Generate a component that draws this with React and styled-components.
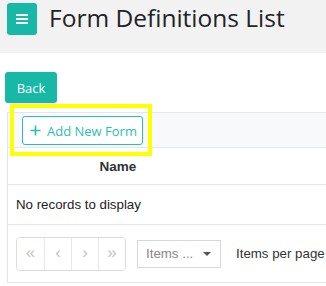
import React from "react";
import styled, { createGlobalStyle } from "styled-components";

const Global = createGlobalStyle`
  html, body { margin: 0; padding: 0; background: #fff; overflow: hidden; }
  body { font-family: "Open Sans", sans-serif; color: #212529; }
  *, *::before, *::after { box-sizing: border-box; }
`;

const Header = styled.header`
  display: flex;
  align-items: flex-start;
  gap: 12px;
  height: 53px;
  padding: 3px 0 0 7px;
  background: #f2f2f2;
`;

const MenuButton = styled.button`
  width: 30px;
  height: 32px;
  border: none;
  border-radius: 3px;
  background: #17b9a6;
  display: flex;
  align-items: center;
  justify-content: center;
  padding: 0;
`;

const Title = styled.h1`
  margin: 0;
  font-family: "Open Sans", sans-serif;
  font-weight: 400;
  font-size: 24.5px;
  line-height: 30px;
  color: #1f2328;
  white-space: nowrap;
`;

const Main = styled.main`
  padding: 19px 0 0 5px;
`;

const BackButton = styled.button`
  width: 52px;
  height: 31px;
  border: none;
  border-radius: 3px;
  background: #17b9a6;
  color: #fff;
  font-family: "Open Sans", sans-serif;
  font-size: 13px;
  padding: 0;
`;

const Panel = styled.section`
  margin: 9px 0 0 2px;
  width: 420px;
  border: 1px solid #e4e6e9;
  border-right: none;
  box-shadow: 0 1px 2px rgba(0, 0, 0, 0.05);
`;

const Toolbar = styled.div`
  background: #f8f9fa;
  padding: 3px 0 0 14px;
  border-bottom: 1px solid #e4e6e9;
  height: 35px;
`;

const Highlighted = styled.span`
  position: relative;
  display: inline-block;
`;

const Marker = styled.span`
  position: absolute;
  left: -12px;
  top: -12px;
  right: -9px;
  bottom: -11px;
  border: 4px solid #ffff00;
  pointer-events: none;
`;

const OutlineButton = styled.button`
  display: flex;
  align-items: center;
  gap: 6px;
  height: 29px;
  width: 121px;
  padding: 0 0 0 7px;
  border: 1px solid #2bbfae;
  border-radius: 3px;
  background: #fff;
  color: #2bbfae;
  font-family: "Open Sans", sans-serif;
  font-size: 13px;
`;

const HeadRow = styled.div`
  height: 37px;
  display: flex;
  align-items: center;
  border-bottom: 1px solid #e4e6e9;
`;

const HeadCell = styled.div`
  width: 220px;
  text-align: center;
  font-family: "Liberation Sans", Arial, sans-serif;
  font-weight: 700;
  font-size: 13.5px;
  color: #333;
`;

const EmptyRow = styled.div`
  height: 40px;
  display: flex;
  align-items: center;
  padding-left: 8px;
  border-bottom: 1px solid #e4e6e9;
  font-family: "Liberation Sans", Arial, sans-serif;
  font-size: 13.3px;
  color: #222;
`;

const Pager = styled.div`
  height: 57px;
  display: flex;
  align-items: center;
  padding-left: 8px;
  gap: 11px;
`;

const PageGroup = styled.div`
  display: flex;
  height: 34px;
  border: 1px solid #dcdcdc;
  border-radius: 4px;
  overflow: hidden;
`;

const PageBtn = styled.button`
  width: 27px;
  height: 100%;
  border: none;
  border-left: ${(p) => (p.$first ? "none" : "1px solid #e8e8e8")};
  background: #fff;
  color: #c4c4c4;
  font-family: "Liberation Sans", Arial, sans-serif;
  font-size: 17px;
  padding: 0 0 2px;
`;

const Select = styled.div`
  width: 84px;
  height: 28px;
  border: 1px solid #d8d8d8;
  display: flex;
  align-items: center;
  justify-content: space-between;
  padding: 0 9px 0 8px;
  font-family: "Liberation Sans", Arial, sans-serif;
  font-size: 13.3px;
  color: #888;
`;

const Caret = styled.span`
  width: 0;
  height: 0;
  border-left: 4px solid transparent;
  border-right: 4px solid transparent;
  border-top: 4px solid #555;
`;

const PerPage = styled.span`
  margin-left: 4px;
  font-family: "Liberation Sans", Arial, sans-serif;
  font-size: 13.3px;
  color: #333;
  white-space: nowrap;
`;

export default function App() {
  return (
    <>
      <Global />
      <Header>
        <MenuButton aria-label="menu">
          <svg width="12" height="10" viewBox="0 0 12 10">
            <rect x="0" y="0" width="12" height="2" fill="#fff" />
            <rect x="0" y="4" width="12" height="2" fill="#fff" />
            <rect x="0" y="8" width="12" height="2" fill="#fff" />
          </svg>
        </MenuButton>
        <Title>Form Definitions List</Title>
      </Header>
      <Main>
        <BackButton>Back</BackButton>
        <Panel>
          <Toolbar>
            <Highlighted>
              <OutlineButton>
                <svg width="11" height="11" viewBox="0 0 11 11">
                  <path d="M5.5 0.5v10M0.5 5.5h10" stroke="#2bbfae" strokeWidth="1.6" />
                </svg>
                Add New Form
              </OutlineButton>
              <Marker />
            </Highlighted>
          </Toolbar>
          <HeadRow>
            <HeadCell>Name</HeadCell>
          </HeadRow>
          <EmptyRow>No records to display</EmptyRow>
          <Pager>
            <PageGroup>
              <PageBtn $first>«</PageBtn>
              <PageBtn>‹</PageBtn>
              <PageBtn>›</PageBtn>
              <PageBtn>»</PageBtn>
            </PageGroup>
            <Select>
              <span>Items ...</span>
              <Caret />
            </Select>
            <PerPage>Items per page</PerPage>
          </Pager>
        </Panel>
      </Main>
    </>
  );
}
